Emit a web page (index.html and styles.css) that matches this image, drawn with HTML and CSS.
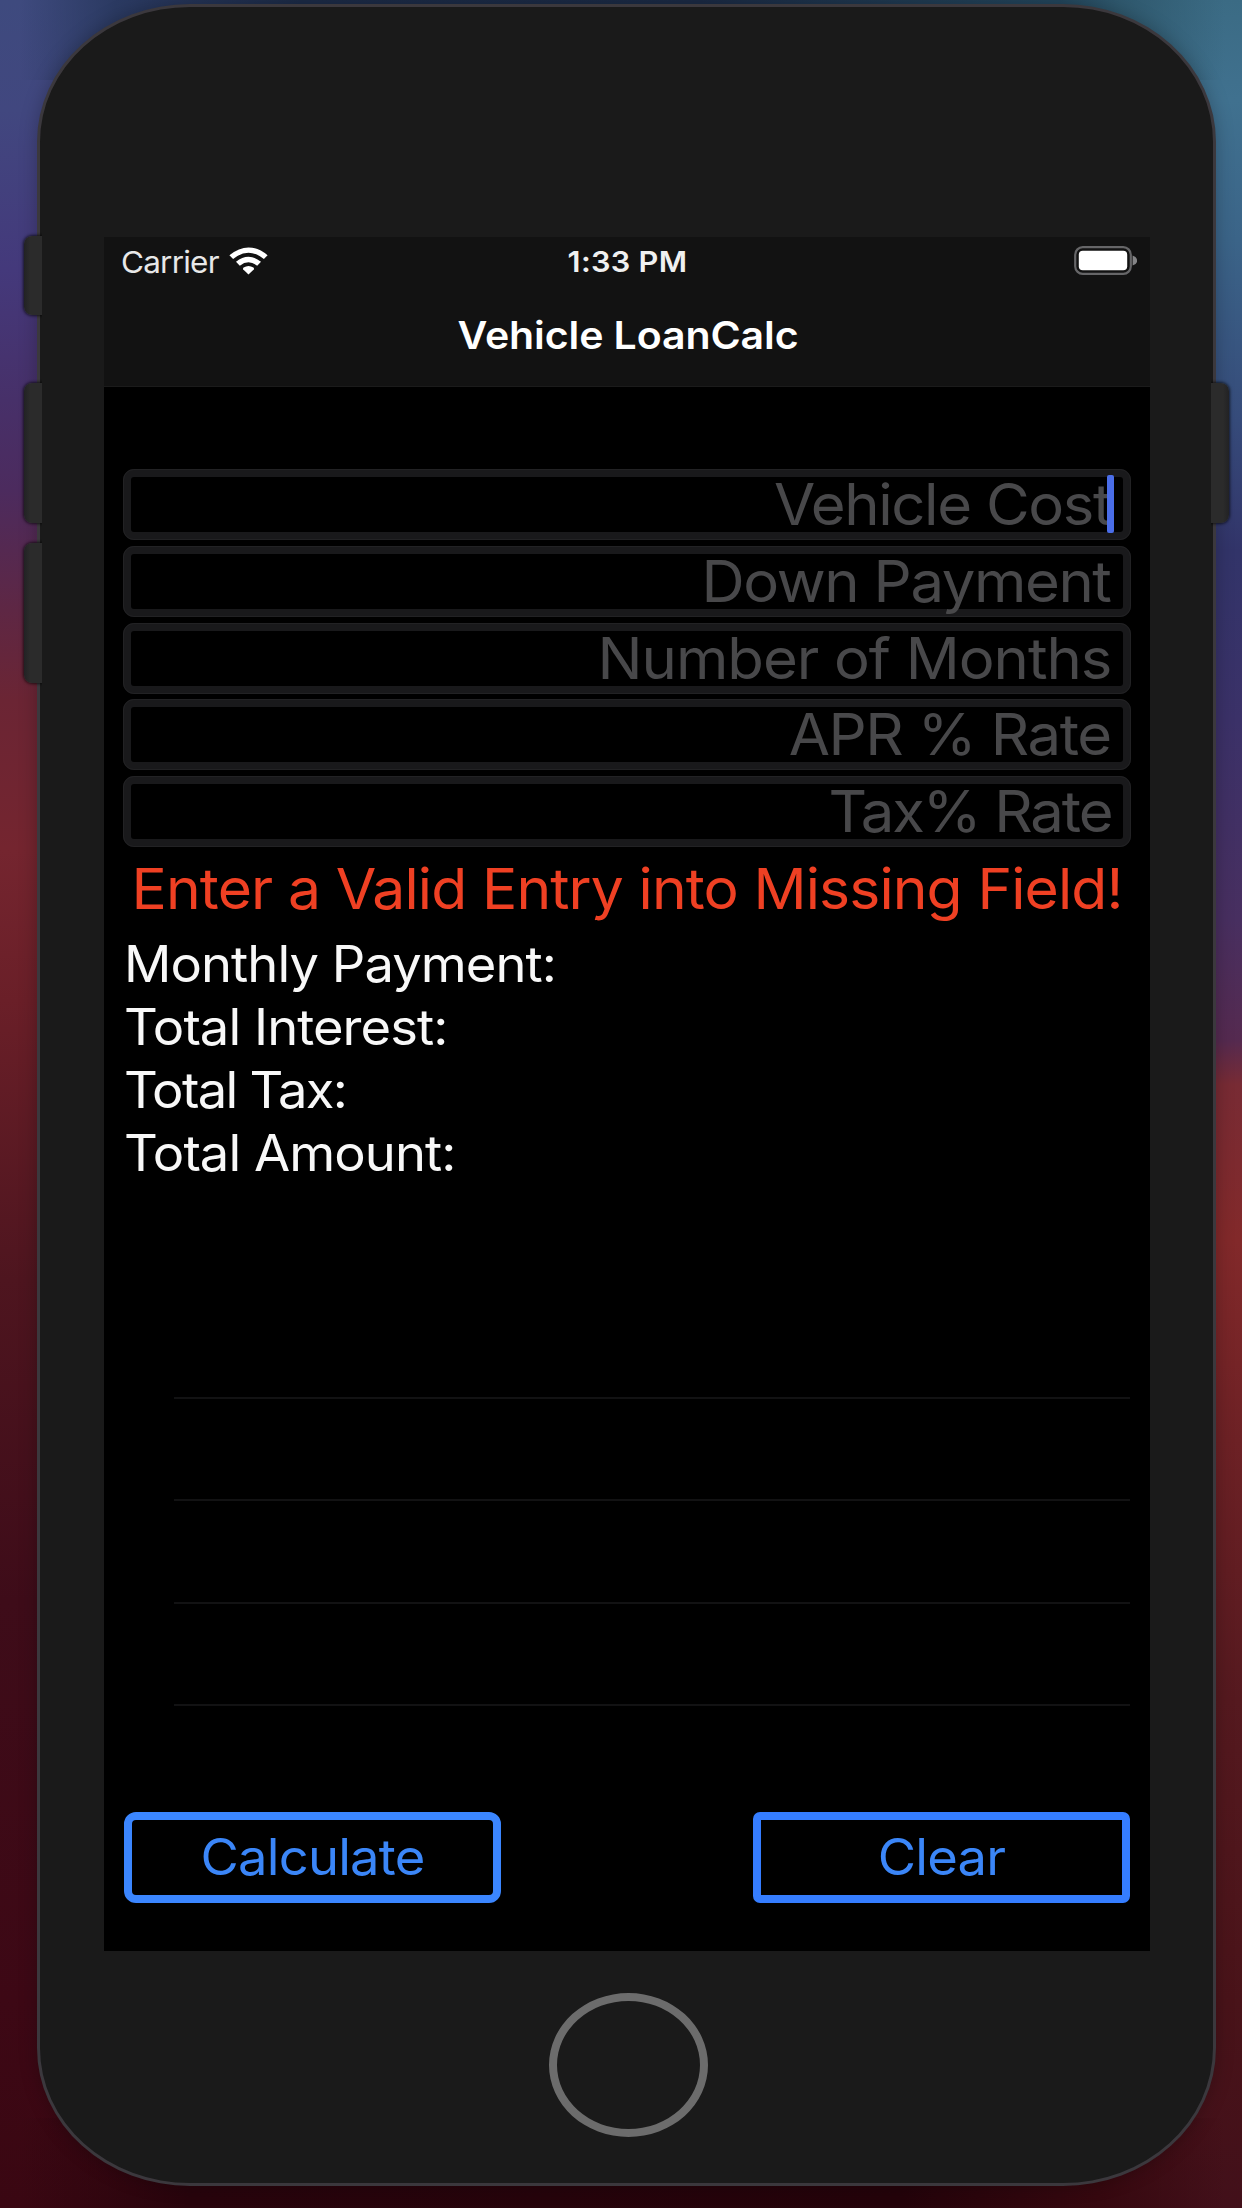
FILE: index.html
```html
<!DOCTYPE html>
<html lang="en">
<head>
<meta charset="utf-8">
<title>Vehicle LoanCalc</title>
<link rel="stylesheet" href="styles.css">
</head>
<body class="desktop">
  <div class="device">
    <span class="side-button mute"></span>
    <span class="side-button volume-up"></span>
    <span class="side-button volume-down"></span>
    <span class="side-button power"></span>
    <div class="case">
      <main class="screen">
        <header class="header">
          <div class="status-bar">
            <div class="carrier">
              <span class="carrier-name">Carrier</span>
              <svg class="wifi" viewBox="0 0 39 28" preserveAspectRatio="none">
                <path d="M19.5 27.5 L14.2 22.4 Q13.6 21.4 14.6 20.6 Q19.5 17.2 24.4 20.6 Q25.4 21.4 24.8 22.4 Z"/>
                <path d="M7 14.8 Q19.5 4.6 32 14.8 L28.2 18.7 Q19.5 11.8 10.8 18.7 Z"/>
                <path d="M.4 8.2 Q19.5 -7.4 38.6 8.2 L34.9 12.1 Q19.5 -.8 4.1 12.1 Z"/>
              </svg>
            </div>
            <time class="clock">1:33 PM</time>
            <svg class="battery" viewBox="0 0 63 30">
              <rect x="1.2" y="1.2" width="55.6" height="26.6" rx="7.5" fill="none" stroke="#666668" stroke-width="2.2"/>
              <rect x="4.8" y="4.8" width="48.4" height="19.4" rx="4" fill="#fff"/>
              <path d="M58.6 9.6 Q63.2 11 63.2 14.6 T58.6 19.6 Z" fill="#858587"/>
            </svg>
          </div>
          <h1 class="title">Vehicle LoanCalc</h1>
        </header>

        <form class="form">
          <div class="field"><span class="hint">Vehicle Cost</span><i class="caret"></i></div>
          <div class="field"><span class="hint">Down Payment</span></div>
          <div class="field"><span class="hint loose">Number of Months</span></div>
          <div class="field"><span class="hint">APR % Rate</span></div>
          <div class="field"><span class="hint tight">Tax% Rate</span></div>
        </form>

        <p class="error">Enter a Valid Entry into Missing Field!</p>

        <ul class="results">
          <li>Monthly Payment:</li>
          <li>Total Interest:</li>
          <li class="snug">Total Tax:</li>
          <li>Total Amount:</li>
        </ul>

        <div class="table">
          <div class="row"></div>
          <div class="row"></div>
          <div class="row"></div>
          <div class="row"></div>
        </div>

        <div class="actions">
          <button class="button calculate" type="button"><span class="label">Calculate</span></button>
          <button class="button clear" type="button"><span class="label">Clear</span></button>
        </div>
      </main>
      <div class="home"></div>
    </div>
  </div>
</body>
</html>
```
FILE: styles.css
```css
* { box-sizing: border-box; }

.desktop {
  margin: 0;
  height: 2208px;
  padding: 4px 26px 22px 37px;
  overflow: hidden;
  font-family: Inter, "Liberation Sans", sans-serif;
  background:
    linear-gradient(90deg, rgba(62, 74, 126, 0) 20px, #2b3a62 115px, #1c2b47 300px, #1b2a44 700px, #23465c 1060px, #2f586d 1120px, rgba(59, 107, 132, 0) 1225px) 0 0 / 1242px 80px no-repeat,
    linear-gradient(90deg, rgba(60, 8, 20, 0) 20px, #28040c 190px, #24030a 900px, #36080f 1100px, rgba(66, 16, 26, 0) 1225px) 0 100% / 1242px 90px no-repeat,
    linear-gradient(#3e4a7e 0, #41477f 110px, #44397b 270px, #473069 400px, #4c2b5e 490px, #5e2744 610px, #6b2534 700px, #74252f 850px, #6a1f28 1000px, #4e151f 1280px, #3e0c19 1600px, #3d0815 2000px, #3a0712 2208px) 0 0 / 621px 100% no-repeat,
    linear-gradient(#3b6b84 0, #40718f 100px, #3b6488 240px, #364b7a 420px, #323469 550px, #3b3168 720px, #482f60 920px, #552a50 1040px, #782b34 1085px, #82292a 1240px, #6d2125 1440px, #55191f 1700px, #491319 2000px, #42101a 2208px) 621px 0 / 621px 100% no-repeat;
}

.device {
  position: relative;
  height: 2182px;
}

.case {
  height: 100%;
  padding: 230px 63px 0 64px;
  border: 3px solid #3b383d;
  border-radius: 153px / 138px;
  background: #1a1a1a;
  box-shadow: 0 0 18px rgba(0, 0, 0, .25);
}

.side-button {
  position: absolute;
  z-index: 1;
  left: -13px;
  width: 18px;
  border-radius: 8px 0 0 8px;
  background: linear-gradient(90deg, #222224, #2b2b2b 6px);
  box-shadow: 0 0 3px 1px rgba(0, 0, 0, .65);
  clip-path: inset(-5px 0 -5px -5px);
}
.mute { top: 232px; height: 79px; }
.volume-up { top: 379px; height: 140px; }
.volume-down { top: 539px; height: 140px; }
.power {
  top: 379px;
  left: auto;
  right: -13px;
  height: 140px;
  border-radius: 0 8px 8px 0;
  background: linear-gradient(270deg, #222224, #2b2b2b 6px);
  clip-path: inset(-5px -5px -5px 0);
}

.screen {
  width: 1046px;
  height: 1714px;
  background: #000;
}

.header {
  height: 150px;
  background: #121212;
  border-bottom: 1px solid #1b1b1b;
  color: #fff;
}

.status-bar {
  display: grid;
  grid-template-columns: 1fr auto 1fr;
  align-items: center;
  height: 50px;
  padding: 0 13px 0 17px;
}
.carrier {
  display: flex;
  align-items: center;
  gap: 15px;
  font-size: 30px;
  line-height: 50px;
  color: #e8e8e8;
}
.carrier-name {
  letter-spacing: -.75px;
  transform: scaleX(1.05);
  transform-origin: left;
}
.wifi { width: 39px; height: 28px; fill: #fff; margin-top: -2px; }
.clock {
  font-size: 29px;
  line-height: 50px;
  font-weight: 600;
  letter-spacing: .25px;
  transform: translateX(-2px) scaleX(1.06);
  color: #f0f0f0;
}
.battery { justify-self: end; width: 63px; height: 30px; margin-top: -2px; }

.title {
  margin: 18px 0 0;
  font-size: 38px;
  line-height: 60px;
  font-weight: 600;
  letter-spacing: -.1px;
  text-align: center;
  transform: translateX(1px) scaleX(1.08);
}

.form {
  display: grid;
  gap: 5.75px;
  padding: 82px 19px 0;
}
.field {
  position: relative;
  display: flex;
  align-items: center;
  justify-content: flex-end;
  height: 71px;
  padding-right: 12px;
  border: 8px solid #19191b;
  border-radius: 11px;
  outline: 1px solid #222224;
  outline-offset: -1px;
  font-size: 57px;
  line-height: 55px;
  color: #48484a;
}
.hint {
  letter-spacing: -1.35px;
  transform: scaleX(1.05);
  transform-origin: right;
}
.hint.loose { letter-spacing: -1px; }
.hint.tight { letter-spacing: -2px; }
.caret {
  position: absolute;
  right: 9px;
  top: -2px;
  width: 7px;
  height: 58px;
  border-radius: 2px;
  background: #4a6de8;
}

.error {
  margin: 12px 0 0;
  font-size: 56px;
  line-height: 60px;
  letter-spacing: -.85px;
  text-align: center;
  white-space: nowrap;
  transform: scaleX(1.05);
  color: #ef4023;
}

.results {
  margin: 14px 0 0;
  padding: 0 20px;
  list-style: none;
  font-size: 50px;
  line-height: 63px;
  letter-spacing: -.9px;
  color: #f8f8f8;
}
.results li {
  transform: scaleX(1.05);
  transform-origin: left;
}
.results .snug { letter-spacing: -1.6px; }

.table { margin: 112px 20px 0 70px; }
.row {
  height: 102.2px;
  border-bottom: 2px solid #121213;
}

.actions {
  display: flex;
  justify-content: space-between;
  padding: 106px 20px 0;
}
.button {
  width: 377px;
  height: 91px;
  padding: 0;
  border: 8px solid #3b86ff;
  border-radius: 12px;
  background: #000;
  font: 400 50px/74px Inter, "Liberation Sans", sans-serif;
  letter-spacing: -.75px;
  color: #3b86f8;
}
.clear { border-color: #357dff; border-radius: 7px; }
.label {
  display: block;
  transform: scaleX(1.05);
}

.home {
  width: 159px;
  height: 144px;
  margin: 42px auto 0;
  border: 8px solid #6c6c6c;
  border-radius: 50%;
  transform: translateX(1px);
}
```
